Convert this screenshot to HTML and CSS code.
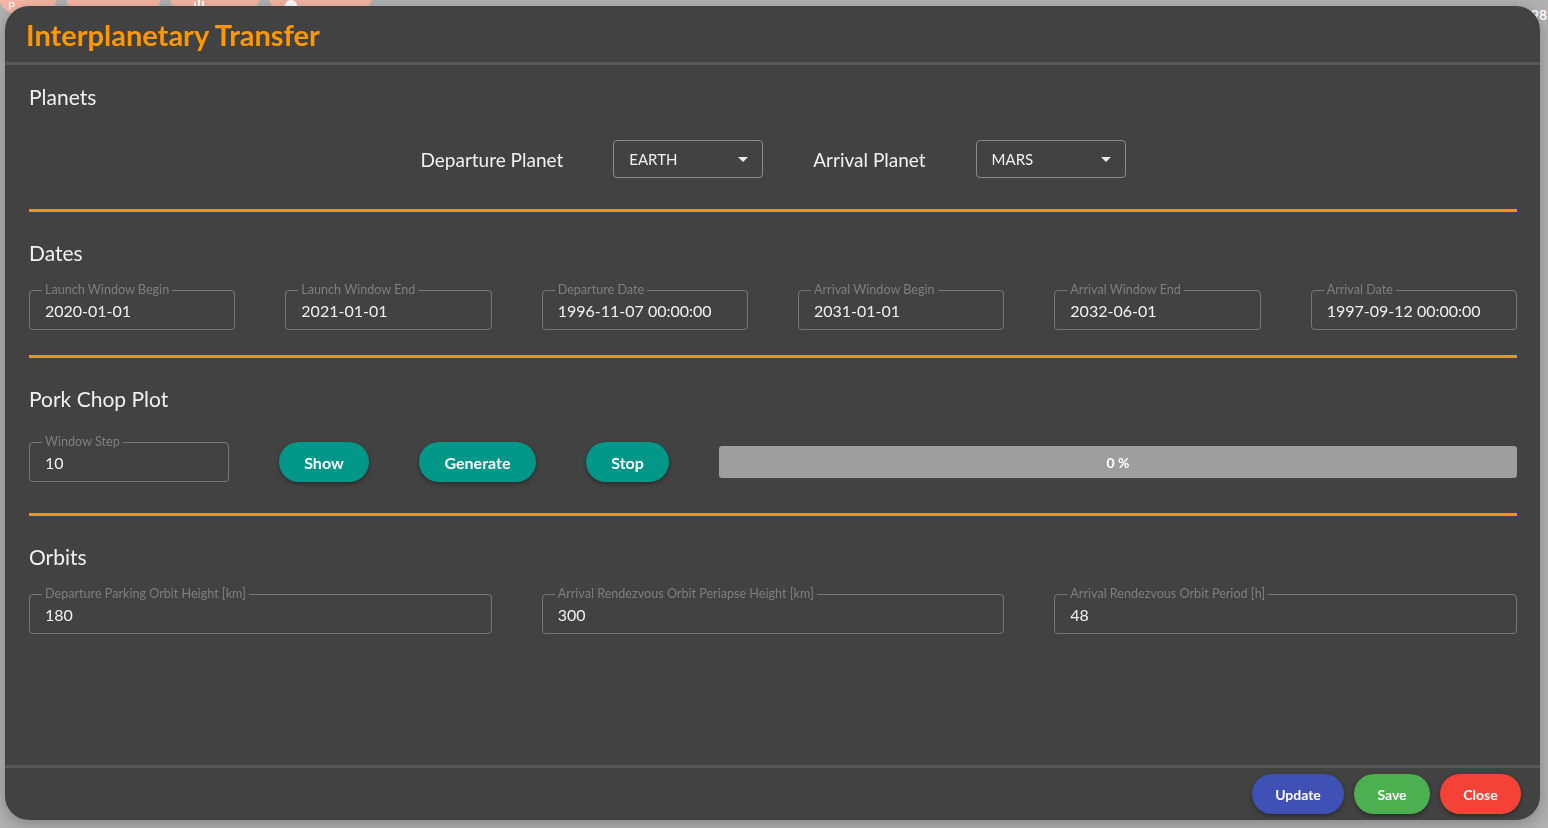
FILE: index.html
```html
<!DOCTYPE html>
<html lang="en">
<head>
<meta charset="utf-8">
<title>Interplanetary Transfer</title>
<link rel="stylesheet" href="styles.css">
</head>
<body>
<div class="appbar">
  <span class="pill pill-1"><span class="pill-text">P</span></span>
  <span class="pill pill-2"></span>
  <span class="pill pill-3"><svg class="pill-icon" width="14" height="10" viewBox="0 0 14 10"><rect x="1" y="4" width="2" height="6" fill="#fff"/><rect x="5" y="0" width="2" height="10" fill="#fff"/><rect x="9" y="3" width="2" height="7" fill="#fff"/></svg></span>
  <span class="pill pill-4"><span class="pill-dot"></span></span>
  <span class="appbar-spacer"></span>
  <span class="appbar-num">1998</span>
</div>

<div class="dialog">
  <div class="dlg-header">Interplanetary Transfer</div>

  <div class="dlg-body">
    <section class="section sec-planets">
      <h2 class="sec-title">Planets</h2>
      <div class="planet-row">
        <span class="planet-label">Departure Planet</span>
        <div class="select"><span>EARTH</span><span class="caret"></span></div>
        <span class="planet-label">Arrival Planet</span>
        <div class="select"><span>MARS</span><span class="caret"></span></div>
      </div>
    </section>
    <hr class="sep sep-1">

    <section class="section">
      <h2 class="sec-title">Dates</h2>
      <div class="dates-grid">
        <div class="field"><span class="field-label">Launch Window Begin</span><span class="field-value">2020-01-01</span></div>
        <div class="field"><span class="field-label">Launch Window End</span><span class="field-value">2021-01-01</span></div>
        <div class="field"><span class="field-label">Departure Date</span><span class="field-value">1996-11-07 00:00:00</span></div>
        <div class="field"><span class="field-label">Arrival Window Begin</span><span class="field-value">2031-01-01</span></div>
        <div class="field"><span class="field-label">Arrival Window End</span><span class="field-value">2032-06-01</span></div>
        <div class="field"><span class="field-label">Arrival Date</span><span class="field-value">1997-09-12 00:00:00</span></div>
      </div>
    </section>
    <hr class="sep sep-2">

    <section class="section">
      <h2 class="sec-title">Pork Chop Plot</h2>
      <div class="pork-row">
        <div class="field field-step"><span class="field-label">Window Step</span><span class="field-value">10</span></div>
        <button class="btn btn-teal btn-show">Show</button>
        <button class="btn btn-teal btn-generate">Generate</button>
        <button class="btn btn-teal btn-stop">Stop</button>
        <div class="progress"><span>0 %</span></div>
      </div>
    </section>
    <hr class="sep sep-3">

    <section class="section">
      <h2 class="sec-title">Orbits</h2>
      <div class="orbits-grid">
        <div class="field"><span class="field-label">Departure Parking Orbit Height [km]</span><span class="field-value">180</span></div>
        <div class="field"><span class="field-label">Arrival Rendezvous Orbit Periapse Height [km]</span><span class="field-value">300</span></div>
        <div class="field"><span class="field-label">Arrival Rendezvous Orbit Period [h]</span><span class="field-value">48</span></div>
      </div>
    </section>
  </div>

  <div class="dlg-footer">
    <button class="btn btn-sm btn-update">Update</button>
    <button class="btn btn-sm btn-save">Save</button>
    <button class="btn btn-sm btn-close">Close</button>
  </div>
</div>
</body>
</html>
```

FILE: styles.css
```css
* { box-sizing: border-box; }

html, body {
  margin: 0;
  height: 828px;
  overflow: hidden;
}

body {
  background: #b1b1b1;
  font-family: Lato, "Open Sans", "Noto Sans", sans-serif;
  color: #ececec;
}

/* background app bar (dimmed) */
.appbar {
  display: flex;
  align-items: flex-start;
  gap: 9px;
  height: 14px;
}
.pill {
  display: flex;
  align-items: flex-end;
  justify-content: center;
  height: 40px;
  margin-top: -26px;
  border-radius: 18px;
  background: #f5b4a4;
  color: #fff;
  font-size: 12px;
}
.pill-1 { width: 58px; margin-left: -1px; justify-content: flex-start; padding-left: 9px; }
.pill-2 { width: 95px; }
.pill-3 { width: 90px; }
.pill-4 { width: 103px; justify-content: flex-start; padding-left: 16px; }
.pill-text { line-height: 12px; margin-bottom: 2px; }
.pill-icon { margin-left: -30px; margin-bottom: 6px; }
.pill-dot {
  width: 12px; height: 12px; border-radius: 50%;
  background: #fff; margin-bottom: 2px;
}
.appbar-spacer { flex: 1; }
.appbar-num {
  color: #fff;
  font-size: 14px;
  font-weight: 700;
  margin-top: 6px;
  margin-right: 1px;
}

/* dialog */
.dialog {
  position: fixed;
  left: 5px;
  top: 6px;
  width: 1535px;
  height: 814px;
  background: #424242;
  border-radius: 24px;
  box-shadow: 0 4px 16px rgba(0,0,0,0.25);
  display: flex;
  flex-direction: column;
  overflow: hidden;
}

.dlg-header {
  height: 59px;
  padding: 1px 0 0 21px;
  display: flex;
  align-items: center;
  color: #ff9800;
  font-size: 29px;
  font-weight: 700;
  border-bottom: 3px solid #575757;
  flex: none;
}

.dlg-body {
  flex: 1;
  padding: 0 23px 0 24px;
}

.section { margin: 0; }

.sec-title {
  margin: 0;
  height: 30px;
  line-height: 30px;
  font-size: 21px;
  font-weight: 400;
  color: #f0f0f0;
}
.sec-planets .sec-title { margin-top: 17px; }

.sep {
  margin: 0;
  border: 0;
  height: 3px;
  background: #f0911a;
}
.sep-1 { margin-top: 31px; }
.sep-2 { margin-top: 25px; }
.sep-3 { margin-top: 31px; }
.sep + .section .sec-title { margin-top: 26px; }

/* planets */
.planet-row {
  margin-top: 28px;
  display: flex;
  justify-content: center;
  align-items: center;
  gap: 50px;
  height: 38px;
}
.planet-label {
  font-size: 19px;
  color: #f0f0f0;
  padding-top: 1px;
}
.select {
  width: 150px;
  height: 38px;
  border: 1px solid #8a8a8a;
  border-radius: 4px;
  padding: 0 14px 0 15px;
  display: flex;
  align-items: center;
  justify-content: space-between;
  font-size: 15px;
  color: #f0f0f0;
}
.caret {
  width: 0; height: 0;
  border-left: 5px solid transparent;
  border-right: 5px solid transparent;
  border-top: 5px solid #e8e8e8;
}

/* outlined fields */
.field {
  position: relative;
  height: 40px;
  border: 1px solid #777;
  border-radius: 4px;
  padding: 0 15px;
  display: flex;
  align-items: center;
}
.field-label {
  position: absolute;
  top: -8px;
  left: 12px;
  padding: 0 3px;
  background: #424242;
  font-size: 12.6px;
  line-height: 14px;
  color: #7e7e7e;
  white-space: nowrap;
}
.field-value {
  font-size: 16px;
  color: #f0f0f0;
  padding-top: 1px;
}

.dates-grid {
  margin-top: 22px;
  display: grid;
  grid-template-columns: repeat(6, 1fr);
  gap: 50px;
}

.orbits-grid {
  margin-top: 22px;
  display: grid;
  grid-template-columns: repeat(3, 1fr);
  gap: 50px;
}

/* pork chop */
.pork-row {
  margin-top: 28px;
  display: flex;
  align-items: center;
  gap: 50px;
}
.field-step { width: 200px; flex: none; }

.btn {
  border: 0;
  font-family: inherit;
  font-weight: 700;
  color: #fff;
  cursor: pointer;
  flex: none;
}
.btn-teal {
  height: 40px;
  border-radius: 20px;
  background: #009688;
  font-size: 16px;
  box-shadow: 0 2px 4px rgba(0,0,0,0.35);
}
.btn-show { width: 90px; }
.btn-generate { width: 117px; }
.btn-stop { width: 83px; }

.progress {
  flex: 1;
  height: 32px;
  background: #9e9e9e;
  border-radius: 3px;
  display: flex;
  align-items: center;
  justify-content: center;
  font-size: 14px;
  font-weight: 700;
  color: #fff;
}

/* footer */
.dlg-footer {
  flex: none;
  height: 55px;
  border-top: 3px solid #575757;
  display: flex;
  justify-content: flex-end;
  align-items: center;
  gap: 10px;
  padding: 0 19px 0 0;
}
.btn-sm {
  height: 40px;
  border-radius: 20px;
  font-size: 14px;
  box-shadow: 0 2px 4px rgba(0,0,0,0.35);
}
.btn-update { width: 92px; background: #3f51b5; }
.btn-save { width: 76px; background: #4caf50; }
.btn-close { width: 81px; background: #f44336; }
```
